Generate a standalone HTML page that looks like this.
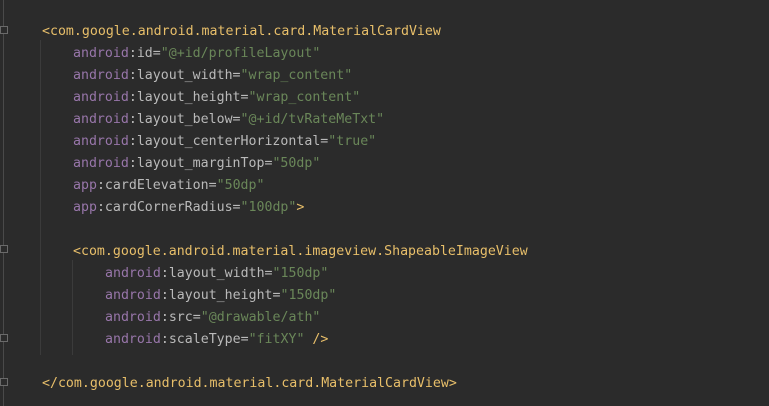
<!DOCTYPE html>
<html><head><meta charset="utf-8"><style>
html,body{margin:0;padding:0;}
body{width:769px;height:406px;background:#2b2b2b;position:relative;overflow:hidden;font-family:"DejaVu Sans Mono","Liberation Mono",monospace;font-size:13.25px;}
.l{position:absolute;white-space:pre;line-height:18px;height:18px;}
.t{color:#e8bf6a}.n{color:#9876aa}.a{color:#bababa}.v{color:#6a8759}
.g{position:absolute;left:3px;width:1px;background:#4a4a4a;}
.ig{position:absolute;width:1px;background:#3b3b3b;}
.f{position:absolute;left:0;width:8px;height:8px;border:1px solid #6a6a6a;background:#2b2b2b;box-sizing:border-box;}
</style></head><body>
<div class="g" style="top:0;height:406px"></div>
<div class="f" style="top:26px"></div>
<div class="f" style="top:245px"></div>
<div class="f" style="top:334px"></div>
<div class="f" style="top:378px"></div>
<div class="ig" style="left:40px;top:40px;height:315px"></div>
<div class="ig" style="left:72px;top:260px;height:95px"></div>
<div class="l" style="left:42px;top:23px"><span class="t">&lt;com.google.android.material.card.MaterialCardView</span></div>
<div class="l" style="left:73px;top:45px"><span class="n">android</span><span class="a">:id=</span><span class="v">"@+id/profileLayout"</span></div>
<div class="l" style="left:73px;top:67px"><span class="n">android</span><span class="a">:layout_width=</span><span class="v">"wrap_content"</span></div>
<div class="l" style="left:73px;top:89px"><span class="n">android</span><span class="a">:layout_height=</span><span class="v">"wrap_content"</span></div>
<div class="l" style="left:73px;top:111px"><span class="n">android</span><span class="a">:layout_below=</span><span class="v">"@+id/tvRateMeTxt"</span></div>
<div class="l" style="left:73px;top:133px"><span class="n">android</span><span class="a">:layout_centerHorizontal=</span><span class="v">"true"</span></div>
<div class="l" style="left:73px;top:155px"><span class="n">android</span><span class="a">:layout_marginTop=</span><span class="v">"50dp"</span></div>
<div class="l" style="left:73px;top:177px"><span class="n">app</span><span class="a">:cardElevation=</span><span class="v">"50dp"</span></div>
<div class="l" style="left:73px;top:199px"><span class="n">app</span><span class="a">:cardCornerRadius=</span><span class="v">"100dp"</span><span class="t">&gt;</span></div>
<div class="l" style="left:73px;top:243px"><span class="t">&lt;com.google.android.material.imageview.ShapeableImageView</span></div>
<div class="l" style="left:105px;top:265px"><span class="n">android</span><span class="a">:layout_width=</span><span class="v">"150dp"</span></div>
<div class="l" style="left:105px;top:287px"><span class="n">android</span><span class="a">:layout_height=</span><span class="v">"150dp"</span></div>
<div class="l" style="left:105px;top:309px"><span class="n">android</span><span class="a">:src=</span><span class="v">"@drawable/ath"</span></div>
<div class="l" style="left:105px;top:331px"><span class="n">android</span><span class="a">:scaleType=</span><span class="v">"fitXY"</span> <span class="t">/&gt;</span></div>
<div class="l" style="left:42px;top:375px"><span class="t">&lt;/com.google.android.material.card.MaterialCardView&gt;</span></div>
</body></html>
